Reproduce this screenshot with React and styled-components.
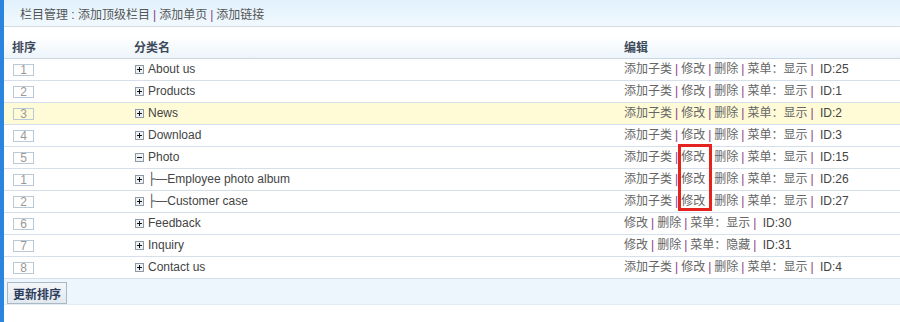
import React from 'react';
import styled, { createGlobalStyle } from 'styled-components';

const GlobalStyle = createGlobalStyle`
body {
    margin: 0;
    background: #fff;
    font-family: "Liberation Sans", "Noto Sans CJK SC", sans-serif;
    font-size: 12px;
    color: #444;
}
`

const Page = styled.div`
position: relative;
height: 322px;
border-left: 4px solid #2b84de;
box-sizing: border-box;
`

const TopBar = styled.div`
height: 26px;
line-height: 30px;
padding-left: 16px;
border-bottom: 1px solid #d4dce2;
background: linear-gradient(#e1f1fc, #f1f9fe);
color: #555;
font-size: 12px;
`

const Sep = styled.span`
color: #8b3a86;
margin: 0 ${p => p.gap || 3}px;
`

const Link = styled.span`
color: ${p => p.dark ? '#444' : '#666'};
`

const Grid = styled.div`
margin-top: 9px;
display: grid;
grid-template-columns: 122px 490px 1fr;
`

const HeadCell = styled.div`
height: 22px;
line-height: 24px;
padding-left: 8px;
font-weight: bold;
color: #3d4a5a;
border-bottom: 1px solid #c9d7e5;
background: linear-gradient(#ffffff, #edf5fb);
`

const Row = styled.div`
display: contents;
& > div {
    background: ${p => p.hot ? '#fffbd7' : '#fff'};
}
`

const Cell = styled.div`
height: 21px;
line-height: 21px;
padding-left: ${p => p.pad ?? 8}px;
border-bottom: 1px solid #d6e0ea;
white-space: nowrap;
display: flex;
align-items: center;
`

const OrderBox = styled.span`
display: inline-block;
box-sizing: border-box;
width: 21px;
height: 12px;
margin-left: 1px;
border: 1px solid #b9c9d8;
color: #999;
font-size: 12px;
line-height: 10px;
text-align: center;
`

const Name = styled.span`
margin-left: ${p => p.child ? 0 : 4}px;
color: #444;
`

const Branch = styled.span`
margin-left: 4px;
color: #555;
font-size: 12px;
`

const BranchBar = styled.span`
font-family: "DejaVu Sans", sans-serif;
`

const Footer = styled.div`
height: 26px;
box-sizing: border-box;
padding: 3px 0 0 3px;
background: #edf6fd;
border-bottom: 1px solid #e4edf3;
`

const Button = styled.button`
width: 60px;
height: 22px;
padding: 0;
border: 1px solid #a9b8c2;
background: linear-gradient(#f3f6f8, #e2e9ee);
font-family: "Noto Sans CJK SC", sans-serif;
font-size: 12px;
font-weight: bold;
color: #2e3d5c;
`

const Mark = styled.div`
position: absolute;
left: 674px;
top: 144px;
width: 34px;
height: 67px;
border: 3px solid #e4231f;
box-sizing: border-box;
`

const Toggle = ({ open }) => (
    <svg width="9" height="9" viewBox="0 0 9 9">
        <rect x="0.5" y="0.5" width="8" height="8" fill="#eef1f3" stroke="#8d9aa5" />
        <line x1="2" y1="4.5" x2="7" y2="4.5" stroke="#111" />
        {!open && <line x1="4.5" y1="2" x2="4.5" y2="7" stroke="#111" />}
    </svg>
)

const rows = [
    { order: 1, name: 'About us', id: 25 },
    { order: 2, name: 'Products', id: 1 },
    { order: 3, name: 'News', id: 2, hot: true },
    { order: 4, name: 'Download', id: 3 },
    { order: 5, name: 'Photo', id: 15, open: true },
    { order: 1, name: 'Employee photo album', id: 26, child: true },
    { order: 2, name: 'Customer case', id: 27, child: true },
    { order: 6, name: 'Feedback', id: 30, noAdd: true },
    { order: 7, name: 'Inquiry', id: 31, noAdd: true, hidden: true },
    { order: 8, name: 'Contact us', id: 4 },
]

const Actions = ({ row }) => (
    <span>
        {!row.noAdd && <><Link>添加子类</Link><Sep>|</Sep></>}
        <Link>修改</Link><Sep>|</Sep>
        <Link>删除</Link><Sep>|</Sep>
        <Link>菜单：{row.hidden ? '隐藏' : '显示'}</Link><Sep>|</Sep>
        <Link dark>&nbsp;ID:{row.id}</Link>
    </span>
)

const App = () => {
    return (
        <Page>
            <GlobalStyle />
            <TopBar>
                栏目管理 : 添加顶级栏目<Sep>|</Sep>添加单页<Sep>|</Sep>添加链接
            </TopBar>
            <Grid>
                <HeadCell>排序</HeadCell>
                <HeadCell>分类名</HeadCell>
                <HeadCell>编辑</HeadCell>
                {rows.map((row, i) => (
                    <Row key={i} hot={row.hot}>
                        <Cell><OrderBox>{row.order}</OrderBox></Cell>
                        <Cell pad={9}>
                            <Toggle open={row.open} />
                            {row.child && <Branch><BranchBar>├</BranchBar>—</Branch>}
                            <Name child={row.child}>{row.name}</Name>
                        </Cell>
                        <Cell><Actions row={row} /></Cell>
                    </Row>
                ))}
            </Grid>
            <Footer>
                <Button>更新排序</Button>
            </Footer>
            <Mark />
        </Page>
    );
};

export default App;
